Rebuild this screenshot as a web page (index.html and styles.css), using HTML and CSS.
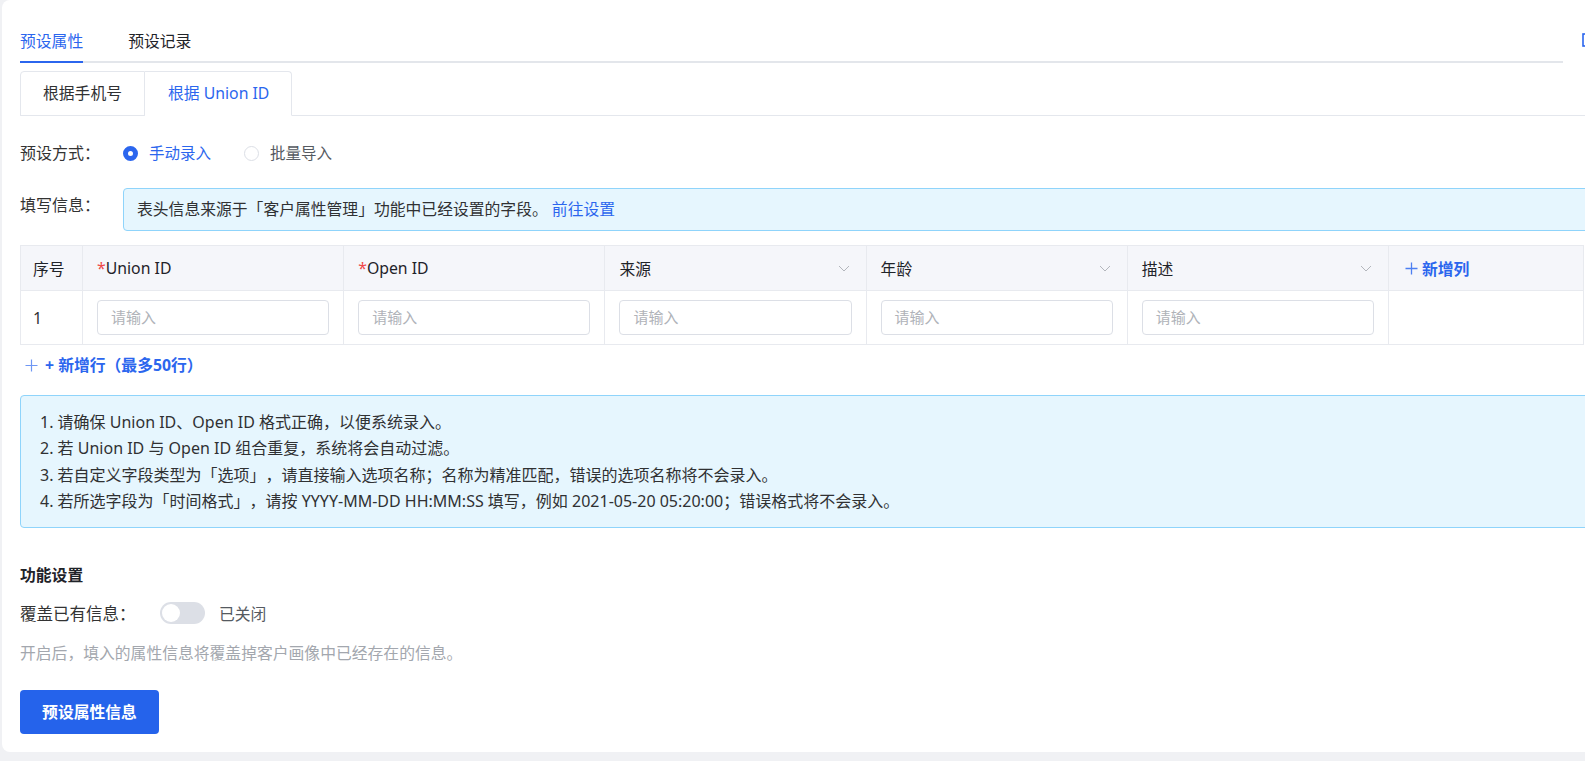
FILE: index.html
```html
<!DOCTYPE html>
<html lang="zh-CN">
<head>
<meta charset="utf-8">
<title>预设属性</title>
<link rel="stylesheet" href="styles.css">
</head>
<body>
<div class="card">
  <div class="tab-row">
    <div class="tab-nav">
      <div class="tab active">预设属性</div>
      <div class="tab">预设记录</div>
    </div>
    <svg class="corner-icon" width="14" height="14" viewBox="0 0 14 14"><rect x="1" y="1" width="12" height="12" fill="none" stroke="#2b66ee" stroke-width="1.6"/></svg>
  </div>

  <div class="subtabs">
    <div class="subtab first">根据手机号</div>
    <div class="subtab active">根据 Union ID</div>
  </div>

  <div class="form-row mode-row">
    <div class="form-label">预设方式：</div>
    <label class="radio checked"><span class="radio-dot"></span><span>手动录入</span></label>
    <label class="radio"><span class="radio-dot"></span><span>批量导入</span></label>
  </div>

  <div class="form-row info-row">
    <div class="form-label top">填写信息：</div>
    <div class="info-box">表头信息来源于「客户属性管理」功能中已经设置的字段。 <a class="link">前往设置</a></div>
  </div>

  <div class="table">
    <div class="th">序号</div>
    <div class="th"><span class="req">*</span>Union ID</div>
    <div class="th"><span class="req">*</span>Open ID</div>
    <div class="th sel">来源<svg class="chev" width="12" height="7" viewBox="0 0 12 7"><path d="M1 1 L6 6 L11 1" fill="none" stroke="#b3b6bc" stroke-width="1"/></svg></div>
    <div class="th sel">年龄<svg class="chev" width="12" height="7" viewBox="0 0 12 7"><path d="M1 1 L6 6 L11 1" fill="none" stroke="#b3b6bc" stroke-width="1"/></svg></div>
    <div class="th sel">描述<svg class="chev" width="12" height="7" viewBox="0 0 12 7"><path d="M1 1 L6 6 L11 1" fill="none" stroke="#b3b6bc" stroke-width="1"/></svg></div>
    <div class="th add-col"><svg class="plus" width="13" height="13" viewBox="0 0 13 13"><path d="M6.5 0.5 V12.5 M0.5 6.5 H12.5" stroke="#4d7ff2" stroke-width="1.3"/></svg><span>新增列</span></div>

    <div class="td idx">1</div>
    <div class="td"><div class="input">请输入</div></div>
    <div class="td"><div class="input">请输入</div></div>
    <div class="td"><div class="input">请输入</div></div>
    <div class="td"><div class="input">请输入</div></div>
    <div class="td"><div class="input">请输入</div></div>
    <div class="td"></div>
  </div>

  <div class="add-row"><svg class="plus" width="13" height="13" viewBox="0 0 13 13"><path d="M6.5 0.5 V12.5 M0.5 6.5 H12.5" stroke="#6f97f4" stroke-width="1.2"/></svg><span>+ 新增行（最多50行）</span></div>

  <div class="notes">
    <p>1. 请确保 Union ID、Open ID 格式正确，以便系统录入。</p>
    <p>2. 若 Union ID 与 Open ID 组合重复，系统将会自动过滤。</p>
    <p>3. 若自定义字段类型为「选项」，请直接输入选项名称；名称为精准匹配，错误的选项名称将不会录入。</p>
    <p>4. 若所选字段为「时间格式」，请按 YYYY-MM-DD HH:MM:SS 填写，例如 2021-05-20 05:20:00；错误格式将不会录入。</p>
  </div>

  <div class="section-title">功能设置</div>
  <div class="switch-row">
    <div class="switch-label">覆盖已有信息：</div>
    <div class="switch"><span class="knob"></span></div>
    <div class="switch-text">已关闭</div>
  </div>
  <div class="help">开启后，填入的属性信息将覆盖掉客户画像中已经存在的信息。</div>

  <div class="btn">预设属性信息</div>
</div>
</body>
</html>
```

FILE: styles.css
```css
html, body {
  margin: 0;
  padding: 0;
  overflow: hidden;
  background: #f0f1f4;
}
body {
  font-family: "Noto Sans", "Noto Sans CJK SC", sans-serif;
  color: #303133;
  font-size: 15.8px;
  width: 1585px;
  height: 761px;
  text-spacing-trim: space-all;
}
.card {
  margin-left: 2px;
  width: 1700px;
  background: #fff;
  border-radius: 8px;
  padding: 0 18px 18px 18px;
  box-sizing: border-box;
}
.tab-row {
  display: flex;
  align-items: flex-start;
}
.tab-nav {
  width: 1543px;
  display: flex;
  gap: 45px;
  padding-top: 29px;
  border-bottom: 2px solid #e3e6eb;
}
.tab {
  font-size: 15.8px;
  line-height: 24px;
  padding-bottom: 8px;
  color: #1f2329;
  border-bottom: 2px solid transparent;
  margin-bottom: -2px;
}
.tab.active {
  color: #2b66ee;
  border-bottom-color: #2b66ee;
}
.corner-icon {
  margin-left: 19px;
  margin-top: 33px;
  flex: none;
}
.subtabs {
  display: flex;
  margin-top: 8px;
  border-bottom: 1px solid #e4e7ed;
  width: 1620px;
}
.subtab {
  height: 43px;
  line-height: 43px;
  padding: 0 22px;
  border: 1px solid #e4e7ed;
  margin-bottom: -1px;
  background: #fff;
  color: #303133;
}
.subtab.first {
  border-radius: 4px 0 0 0;
}
.subtab.active {
  border-left: none;
  border-bottom-color: #fff;
  border-radius: 0 4px 0 0;
  color: #2b66ee;
  padding: 0 22px 0 23px;
}
.form-row {
  display: flex;
  align-items: center;
}
.form-label {
  width: 103px;
  flex: none;
  font-size: 16px;
  line-height: 24px;
  color: #333;
}
.mode-row {
  margin-top: 25px;
  height: 24px;
}
.radio {
  display: flex;
  align-items: center;
  gap: 11px;
  margin-right: 33px;
  line-height: 24px;
  color: #555a61;
  font-size: 15.5px;
}
.radio-dot {
  width: 13px;
  height: 13px;
  border: 1px solid #dcdfe6;
  border-radius: 50%;
  box-sizing: content-box;
  background: #fff;
}
.radio.checked {
  color: #2b66ee;
}
.radio.checked .radio-dot {
  width: 5px;
  height: 5px;
  border: 5px solid #2b66ee;
}
.info-row {
  margin-top: 23px;
  align-items: flex-start;
}
.form-label.top {
  padding-top: 5px;
}
.info-box {
  flex: 1;
  height: 41px;
  line-height: 41px;
  background: #e6f6fe;
  border: 1px solid #8fd4fb;
  border-radius: 4px;
  padding-left: 13px;
  color: #303133;
}
.link {
  color: #2b66ee;
  cursor: pointer;
}
.table {
  margin-top: 14px;
  width: 1564px;
  display: grid;
  grid-template-columns: 62px repeat(5, 1fr) 195px;
  border-top: 1px solid #e8eaef;
  border-left: 1px solid #e8eaef;
  box-sizing: border-box;
}
.th, .td {
  border-right: 1px solid #e8eaef;
  border-bottom: 1px solid #e8eaef;
  display: flex;
  align-items: center;
}
.th {
  height: 44px;
  background: #f5f6fa;
  padding: 0 16px 0 14px;
  color: #1f2329;
}
.th:first-child {
  padding-left: 12px;
}
.th.sel {
  justify-content: space-between;
}
.req {
  color: #f04848;
}
.chev {
  display: block;
}
.add-col {
  color: #2b66ee;
  font-weight: 700;
  gap: 4px;
  padding-left: 16px;
}
.td {
  height: 53px;
  padding: 0 14px;
}
.td.idx {
  padding-left: 12px;
  color: #303133;
}
.input {
  width: 100%;
  height: 35px;
  border: 1px solid #dcdfe6;
  border-radius: 4px;
  box-sizing: border-box;
  padding-left: 13px;
  line-height: 33px;
  color: #b0b3b9;
  font-size: 15px;
}
.add-row {
  margin-top: 8px;
  display: flex;
  align-items: center;
  gap: 7px;
  padding-left: 5px;
  line-height: 24px;
  color: #2b66ee;
  font-weight: 700;
}
.notes {
  margin-top: 18px;
  width: 1620px;
  box-sizing: border-box;
  background: #e6f6fe;
  border: 1px solid #8fd4fb;
  border-radius: 4px;
  padding: 13px 19px;
  font-size: 16px;
}
.notes p {
  margin: 0;
  line-height: 26.3px;
  color: #303133;
}
.section-title {
  margin-top: 35px;
  line-height: 24px;
  font-weight: 700;
  color: #1f2329;
}
.switch-row {
  margin-top: 14px;
  display: flex;
  align-items: center;
  height: 24px;
}
.switch-label {
  width: 140px;
  font-size: 16.5px;
  color: #333;
}
.switch {
  width: 45px;
  height: 22px;
  border-radius: 11px;
  background: #dcdfe6;
  position: relative;
  box-sizing: border-box;
  padding: 2px;
}
.knob {
  display: block;
  width: 18px;
  height: 18px;
  border-radius: 50%;
  background: #fff;
}
.switch-text {
  margin-left: 14px;
  color: #555a61;
}
.help {
  margin-top: 16px;
  line-height: 24px;
  color: #a3a7ae;
}
.btn {
  margin-top: 25px;
  width: 139px;
  height: 44px;
  line-height: 44px;
  text-align: center;
  background: #2563eb;
  color: #fff;
  font-weight: 700;
  border-radius: 4px;
}
```
